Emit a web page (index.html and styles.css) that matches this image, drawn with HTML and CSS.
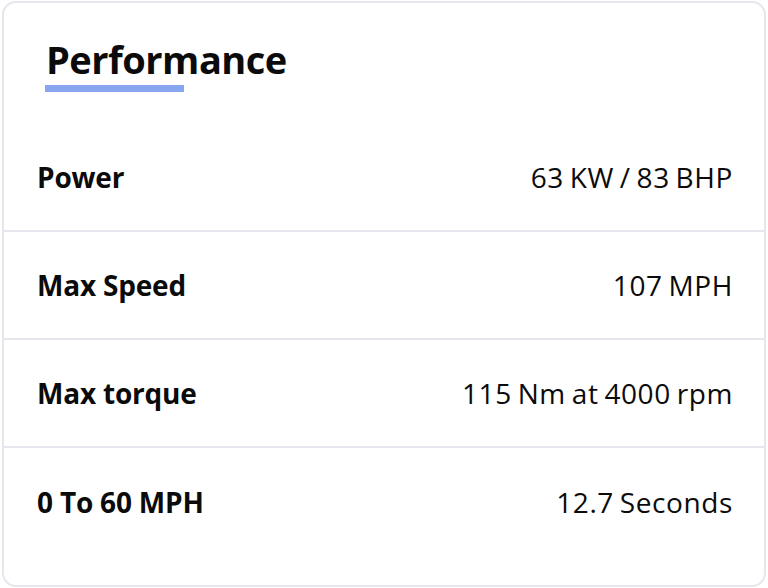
FILE: index.html
```html
<!DOCTYPE html>
<html>
<head>
<meta charset="utf-8">
<link rel="stylesheet" href="styles.css">
</head>
<body>
<div class="card">
  <div class="header">
    <h2 class="title">Performance</h2>
    <div class="underline"></div>
  </div>
  <div class="row"><span class="label">Power</span><span class="value">63 KW / 83 BHP</span></div>
  <div class="row"><span class="label">Max Speed</span><span class="value">107 MPH</span></div>
  <div class="row"><span class="label">Max torque</span><span class="value">115 Nm at 4000 rpm</span></div>
  <div class="row last"><span class="label">0 To 60 MPH</span><span class="value">12.7 Seconds</span></div>
</div>
</body>
</html>
```
FILE: styles.css
```css
html, body {
  margin: 0;
  padding: 0;
  background: #ffffff;
}
body {
  font-family: "Open Sans", "Noto Sans", sans-serif;
  color: #0b0b0b;
}
.card {
  margin: 1px 2px 0 2px;
  height: 586px;
  border: 2px solid #e6e6ef;
  border-radius: 14px;
  box-sizing: border-box;
  display: flex;
  flex-direction: column;
}
.header {
  height: 121px;
  box-sizing: border-box;
  padding: 34px 0 0 41px;
}
.title {
  margin: 0 0 0 1px;
  font-size: 38px;
  font-weight: 700;
  line-height: 44px;
  letter-spacing: -0.5px;
}
.underline {
  width: 139px;
  height: 7px;
  margin-top: 4px;
  background: #89a6f1;
}
.row {
  height: 108px;
  flex: none;
  box-sizing: border-box;
  border-bottom: 2px solid #e6e6ef;
  display: flex;
  align-items: center;
  justify-content: space-between;
  padding: 0 31px 0 33px;
}
.row.last {
  border-bottom: none;
}
.label {
  font-size: 28px;
  font-weight: 700;
  letter-spacing: -0.2px;
}
.value {
  font-size: 28px;
  font-weight: 500;
  letter-spacing: 0.6px;
  word-spacing: -2px;
}
```
